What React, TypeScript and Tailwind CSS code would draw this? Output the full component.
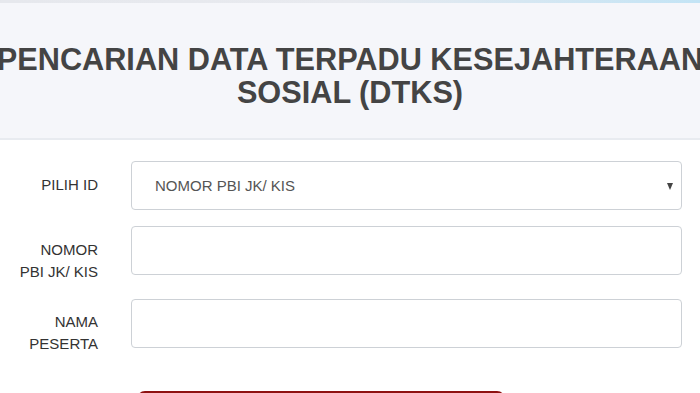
export default function App() {
  const rows = [
    { label: 'NOMOR PBI JK/ KIS', key: 'nomor' },
    { label: 'NAMA PESERTA', key: 'nama' },
  ];

  return (
    <div className="min-h-screen overflow-hidden bg-white font-[family-name:'Liberation_Sans',Arial,sans-serif]">
      {/* top strip */}
      <div className="h-[3px] bg-gradient-to-r from-[#e6e8ed] via-[#e8eaef] to-[#c3e4f5]" />

      {/* title header */}
      <header className="border-b-2 border-[#e8ebf0] bg-[#f5f6fa] pb-[29px] pt-[40px]">
        <h2 className="mx-[-12px] text-center text-[30.7px] font-bold leading-[33px] text-[#444]">
          PENCARIAN DATA TERPADU KESEJAHTERAAN SOSIAL (DTKS)
        </h2>
      </header>

      {/* form */}
      <form className="flex flex-col gap-[16px] pt-[21px] text-[15px] leading-[22px] text-[#333]">
        <div className="flex items-start">
          <label className="ml-[14px] w-[84px] pt-[12.5px] text-right">PILIH ID</label>
          <div className="relative ml-[33px] flex h-[49px] w-[551px] items-center rounded-[4px] border border-[#cdd1d6] bg-white pl-[23px] text-[#555]">
            NOMOR PBI JK/ KIS
            <span className="absolute right-[8px] top-[21px] h-0 w-0 border-x-[3.5px] border-t-[7px] border-x-transparent border-t-[#444]" />
          </div>
        </div>

        {rows.map((r) => (
          <div key={r.key} className="flex items-start">
            <label className="ml-[14px] w-[84px] pt-[12.5px] text-right">{r.label}</label>
            <input
              type="text"
              className="ml-[33px] h-[49px] w-[551px] rounded-[4px] border border-[#cdd1d6] bg-white px-3 outline-none"
            />
          </div>
        ))}

        <div className="ml-[137px] mt-[20px]">
          <button
            type="button"
            aria-label="Cari"
            className="block h-[40px] w-[368px] rounded-[8px] border-t-2 border-[#8e1111] bg-[#c62828]"
          />
        </div>
      </form>
    </div>
  );
}
